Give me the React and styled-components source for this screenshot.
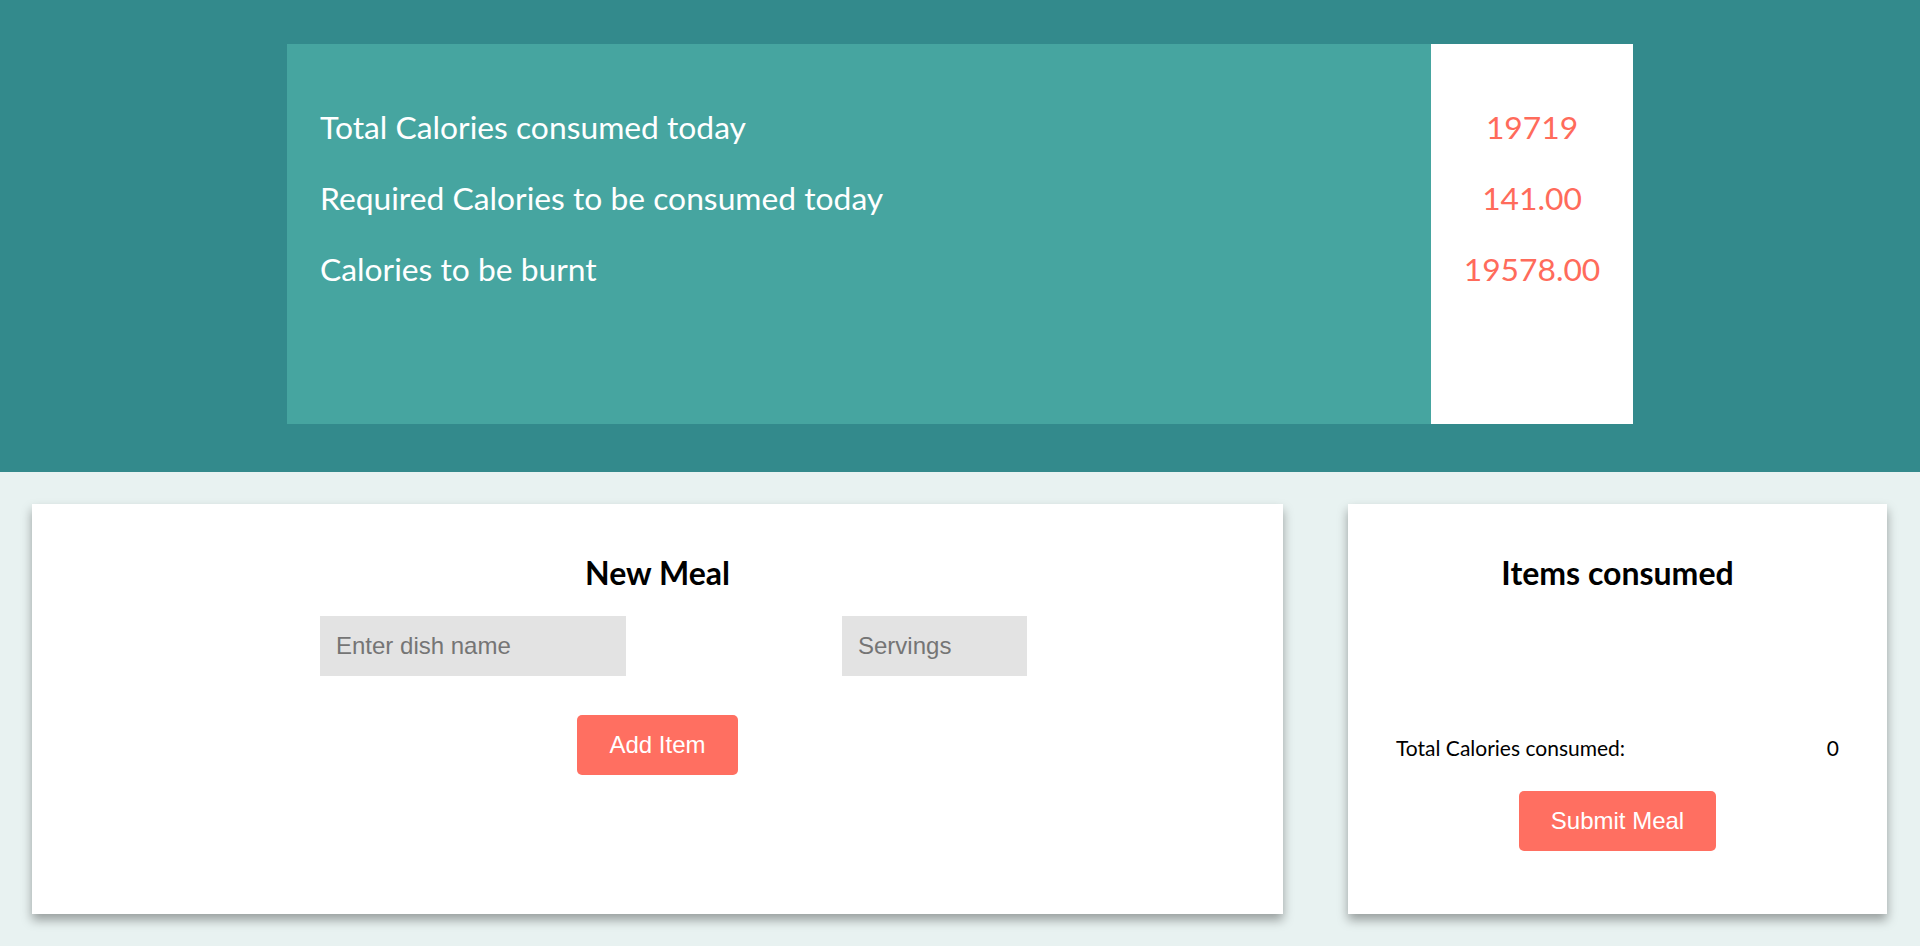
import React from 'react';
import styled, { createGlobalStyle } from 'styled-components';

const Global = createGlobalStyle`
  body {
    margin: 0;
    background: #e8f2f1;
    font-family: Lato, "Open Sans", sans-serif;
  }
`

const Page = styled.div`
  min-height: 100vh;
  background: #e8f2f1;
`

const Header = styled.header`
  background: #338a8c;
  padding: 44px 0 48px;
`

const Summary = styled.div`
  width: 1346px;
  height: 380px;
  margin: 0 auto;
  display: flex;
`

const LabelPane = styled.div`
  flex: 1;
  background: #46a5a0;
  color: #ffffff;
  padding: 48px 0 0 33px;
`

const ValuePane = styled.div`
  width: 202px;
  background: #ffffff;
  color: #ff6b5b;
  text-align: center;
  padding-top: 48px;
`

const Line = styled.div`
  height: 71px;
  line-height: 71px;
  font-size: 31.8px;
`

const Main = styled.main`
  display: flex;
  gap: 65px;
  padding: 32px 33px 32px 32px;
`

const Card = styled.section`
  width: ${p => p.width}px;
  height: 410px;
  box-sizing: border-box;
  background: #ffffff;
  box-shadow: 0 6px 10px rgba(0, 0, 0, 0.35);
  display: flex;
  flex-direction: column;
  align-items: center;
  padding: ${p => p.pad || '0'};
`

const Title = styled.h2`
  margin: 48px 0 0;
  height: 42px;
  line-height: 42px;
  font-size: 32px;
  font-weight: 700;
  color: #000;
`

const InputRow = styled.div`
  align-self: stretch;
  display: flex;
  gap: 216px;
  margin-top: 22px;
  padding-left: 288px;
`

const Field = styled.input`
  width: ${p => p.width}px;
  height: 60px;
  box-sizing: border-box;
  border: none;
  outline: none;
  background: #e3e3e3;
  padding: 0 16px;
  font-family: "Liberation Sans", Arial, sans-serif;
  font-size: 24px;
  color: #333;
  &::placeholder {
    color: #757575;
  }
`

const Button = styled.button`
  height: 60px;
  padding: 0 32px;
  margin-top: ${p => p.top}px;
  border: none;
  border-radius: 5px;
  background: #ff6f61;
  color: #fff;
  font-family: "Liberation Sans", Arial, sans-serif;
  font-size: 24px;
`

const TotalRow = styled.div`
  align-self: stretch;
  display: flex;
  justify-content: space-between;
  margin-top: 141px;
  font-size: 21px;
  line-height: 25px;
  color: #000;
`

export default function App() {
  return (
    <Page>
      <Global />
      <Header>
        <Summary>
          <LabelPane>
            <Line>Total Calories consumed today</Line>
            <Line>Required Calories to be consumed today</Line>
            <Line>Calories to be burnt</Line>
          </LabelPane>
          <ValuePane>
            <Line>19719</Line>
            <Line>141.00</Line>
            <Line>19578.00</Line>
          </ValuePane>
        </Summary>
      </Header>
      <Main>
        <Card width={1251}>
          <Title>New Meal</Title>
          <InputRow>
            <Field width={306} placeholder="Enter dish name" />
            <Field width={185} placeholder="Servings" />
          </InputRow>
          <Button top={39}>Add Item</Button>
        </Card>
        <Card width={539} pad="0 48px">
          <Title>Items consumed</Title>
          <TotalRow>
            <span>Total Calories consumed:</span>
            <span>0</span>
          </TotalRow>
          <Button top={31}>Submit Meal</Button>
        </Card>
      </Main>
    </Page>
  );
}
